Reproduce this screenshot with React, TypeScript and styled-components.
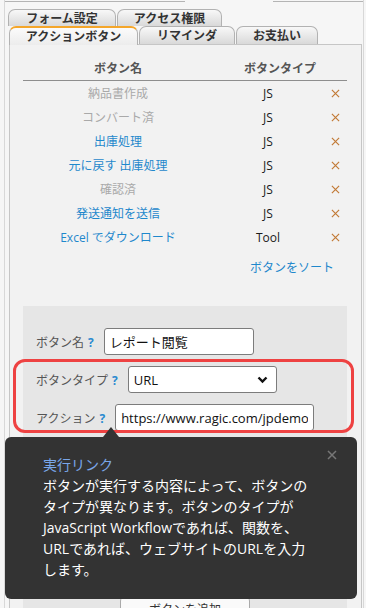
import React from "react";
import styled, { createGlobalStyle, css } from "styled-components";

const GlobalStyle = createGlobalStyle`
  html, body { margin: 0; padding: 0; background: #f6f6f6; }
  body { font-family: "Open Sans", "Noto Sans CJK JP", sans-serif; }
  * { box-sizing: border-box; }
`;

const FONT = `"Open Sans", "Noto Sans CJK JP", sans-serif`;

const Page = styled.div`
  position: relative;
  width: 366px;
  height: 608px;
  overflow: hidden;
  background: #f6f6f6;
  font-family: ${FONT};
`;

const Frame = styled.div`
  margin-left: 4px;
  width: 360px;
  height: 608px;
  border-left: 1px solid #d8d8d8;
  border-right: 1px solid #d8d8d8;
  display: flex;
  flex-direction: column;
`;

const TopEdge = styled.div`
  display: flex;
  height: 2px;
`;

const EdgeSegment = styled.div<{ $w: number; $ml?: number }>`
  width: ${(p) => p.$w}px;
  margin-left: ${(p) => p.$ml ?? 0}px;
  border-top: 1px solid #b4b4b4;
  margin-top: 1px;
`;

const TabRow = styled.div<{ $pl: number; $mt?: number }>`
  display: flex;
  gap: 1px;
  padding-left: ${(p) => p.$pl}px;
  margin-top: ${(p) => p.$mt ?? 0}px;
  align-items: flex-end;
`;

const Tab = styled.div<{ $w: number; $h: number; $active?: boolean }>`
  width: ${(p) => p.$w}px;
  height: ${(p) => p.$h}px;
  border: 1px solid #b2b2b2;
  border-bottom: none;
  border-radius: 7px 7px 0 0;
  background: linear-gradient(#f8f8f8, #d9d9d9);
  display: flex;
  align-items: center;
  justify-content: center;
  font-size: 12px;
  font-weight: 700;
  color: #333;
  line-height: 1;
  padding-top: 1px;
  ${(p) =>
    p.$active &&
    css`
      border-top: 2px solid #f4a62a;
      background: linear-gradient(#fbfbfb, #ececec);
      position: relative;
      z-index: 1;
      margin-bottom: -1px;
      height: ${p.$h + 1}px;
    `}
`;

const Panel = styled.div`
  margin-left: 4px;
  width: 353px;
  flex: 1;
  border: 1px solid #c6c6c6;
  background: #f2f2f2;
  padding: 12px 14px 0 13px;
  display: flex;
  flex-direction: column;
`;

const Table = styled.div`
  display: grid;
  grid-template-columns: 190px 110px 1fr;
`;

const HeadCell = styled.div<{ $span?: number }>`
  grid-column: span ${(p) => p.$span ?? 1};
  height: 24px;
  border-bottom: 1px solid #8e8e8e;
  display: flex;
  align-items: center;
  justify-content: center;
  font-size: 12px;
  font-weight: 700;
  color: #555;
  padding-bottom: 1px;
`;

const Cell = styled.div<{ $tone?: "muted" | "link" | "plain" }>`
  height: 24px;
  display: flex;
  align-items: center;
  justify-content: center;
  font-size: 12px;
  white-space: nowrap;
  color: ${(p) =>
    p.$tone === "muted" ? "#a9a9a9" : p.$tone === "link" ? "#1f88cc" : "#1a1a1a"};
`;

const SortLink = styled.div`
  margin-top: 10px;
  padding-right: 13px;
  text-align: right;
  line-height: 18px;
  font-size: 12px;
  color: #1f88cc;
`;

const FormSection = styled.div`
  margin-top: 29px;
  flex: 1;
  background: #e6e6e6;
  padding: 22px 13px 0 13px;
  display: flex;
  flex-direction: column;
  gap: 11px;
`;

const FormRow = styled.div`
  display: flex;
  align-items: center;
  height: 27px;
`;

const Label = styled.span`
  font-size: 12px;
  color: #555;
  margin-right: 10px;
  white-space: nowrap;
`;

const Help = styled.span`
  color: #2a8ad0;
  font-weight: 700;
  margin-left: 4px;
`;

const TextInput = styled.input<{ $w: number }>`
  width: ${(p) => p.$w}px;
  height: 27px;
  border: 1px solid #7c7c7c;
  border-radius: 3px;
  background: #fff;
  font-family: ${FONT};
  font-size: 13px;
  color: #111;
  padding: 0 5px;
  outline: none;
`;

const SelectBox = styled.div`
  width: 149px;
  height: 27px;
  border: 1px solid #7c7c7c;
  border-radius: 3px;
  background: #fff;
  display: flex;
  align-items: center;
  justify-content: space-between;
  padding: 0 8px 0 5px;
  font-size: 13px;
  color: #111;
`;

const BottomButton = styled.div`
  margin-top: 154px;
  margin-left: 84px;
  width: 130px;
  height: 26px;
  border: 1px solid #aaa;
  border-radius: 5px;
  background: #fafafa;
  display: flex;
  align-items: center;
  justify-content: center;
  font-size: 12px;
  color: #333;
`;

const Highlight = styled.div`
  position: absolute;
  left: 13px;
  top: 359px;
  width: 341px;
  height: 74px;
  border: 3px solid #ee4242;
  border-radius: 12px;
  pointer-events: none;
`;

const Tooltip = styled.div`
  position: absolute;
  left: 5px;
  top: 437px;
  width: 352px;
  height: 162px;
  background: #333333;
  border-radius: 6px;
  padding: 17px 16px 0 38px;
  color: #fff;
  font-size: 14px;
  line-height: 21px;
  z-index: 2;
  &::before {
    content: "";
    position: absolute;
    left: 98px;
    top: -10px;
    border-left: 8px solid transparent;
    border-right: 8px solid transparent;
    border-bottom: 10px solid #333333;
  }
`;

const TipTitle = styled.div`
  color: #7aa7ea;
`;

const TipBody = styled.div`
  white-space: nowrap;
`;

const TipClose = styled.div`
  position: absolute;
  right: 20px;
  top: 13px;
  width: 10px;
  height: 10px;
  display: flex;
`;

const XMark = ({ color, size, w }: { color: string; size: number; w: number }) => (
  <svg width={size} height={size} viewBox="0 0 10 10">
    <path d="M1 1 L9 9 M9 1 L1 9" stroke={color} strokeWidth={w} fill="none" />
  </svg>
);

const Chevron = () => (
  <svg width="11" height="8" viewBox="0 0 11 8">
    <path d="M1.5 1.5 L5.5 5.5 L9.5 1.5" stroke="#111" strokeWidth="2.4" fill="none" />
  </svg>
);

const rows: { name: string; tone: "muted" | "link"; type: string }[] = [
  { name: "納品書作成", tone: "muted", type: "JS" },
  { name: "コンバート済", tone: "muted", type: "JS" },
  { name: "出庫処理", tone: "link", type: "JS" },
  { name: "元に戻す 出庫処理", tone: "link", type: "JS" },
  { name: "確認済", tone: "muted", type: "JS" },
  { name: "発送通知を送信", tone: "link", type: "JS" },
  { name: "Excel でダウンロード", tone: "link", type: "Tool" },
];

export default function App() {
  return (
    <Page>
      <GlobalStyle />
      <Frame>
        <TopEdge>
          <EdgeSegment $w={180} />
          <EdgeSegment $w={90} $ml={88} />
        </TopEdge>
        <TabRow $pl={3} $mt={7}>
          <Tab $w={108} $h={17}>フォーム設定</Tab>
          <Tab $w={105} $h={17}>アクセス権限</Tab>
        </TabRow>
        <TabRow $pl={4}>
          <Tab $w={129} $h={18} $active>アクションボタン</Tab>
          <Tab $w={96} $h={18}>リマインダ</Tab>
          <Tab $w={82} $h={18}>お支払い</Tab>
        </TabRow>
        <Panel>
          <Table>
            <HeadCell>ボタン名</HeadCell>
            <HeadCell $span={2}>ボタンタイプ</HeadCell>
            {rows.map((r) => (
              <React.Fragment key={r.name}>
                <Cell $tone={r.tone}>{r.name}</Cell>
                <Cell $tone="plain">{r.type}</Cell>
                <Cell>
                  <XMark color="#c27a36" size={9} w={1.3} />
                </Cell>
              </React.Fragment>
            ))}
          </Table>
          <SortLink>ボタンをソート</SortLink>
          <FormSection>
            <FormRow>
              <Label>
                ボタン名<Help>?</Help>
              </Label>
              <TextInput $w={150} readOnly value="レポート閲覧" />
            </FormRow>
            <FormRow>
              <Label>
                ボタンタイプ<Help>?</Help>
              </Label>
              <SelectBox>
                <span>URL</span>
                <Chevron />
              </SelectBox>
            </FormRow>
            <FormRow>
              <Label>
                アクション<Help>?</Help>
              </Label>
              <TextInput $w={199} readOnly value="https://www.ragic.com/jpdemo/sales/3" />
            </FormRow>
            <BottomButton>ボタンを追加</BottomButton>
          </FormSection>
        </Panel>
      </Frame>
      <Highlight />
      <Tooltip>
        <TipClose>
          <XMark color="#777" size={10} w={1.5} />
        </TipClose>
        <TipTitle>実行リンク</TipTitle>
        <TipBody>
          ボタンが実行する内容によって、ボタンの
          <br />
          タイプが異なります。ボタンのタイプが
          <br />
          JavaScript Workflowであれば、関数を、
          <br />
          URLであれば、ウェブサイトのURLを入力
          <br />
          します。
        </TipBody>
      </Tooltip>
    </Page>
  );
}
